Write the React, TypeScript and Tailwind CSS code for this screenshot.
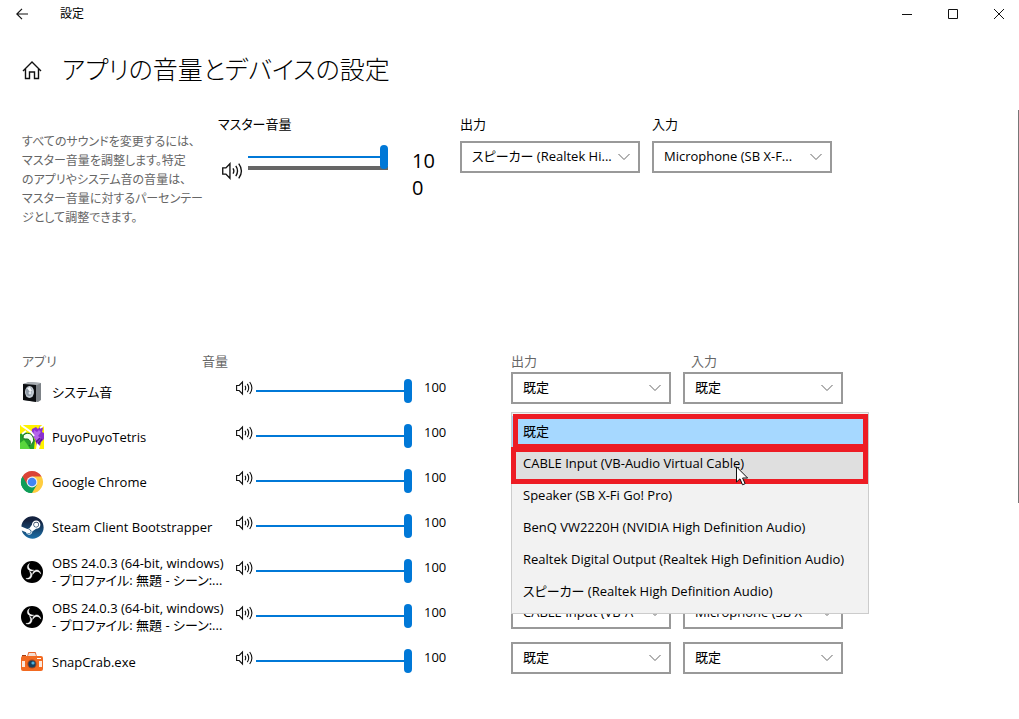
import React, { useState } from 'react';
import { FaSteam } from 'react-icons/fa';

interface AppItem {
  id: number;
  name: string[];
  icon: React.FC;
  output: string;
  input: string;
}

const SystemIcon = () => (
  <svg width="24" height="24" viewBox="0 0 24 24">
    <path d="M3 4l6-2 12 1v17l-3 2-15-2z" fill="#7d8287" />
    <path d="M3 4l6-2 12 1-4 2z" fill="#a9aeb3" />
    <path d="M3 4l13 1v17L3 20z" fill="#0b0d10" />
    <ellipse cx="9.500" cy="12" rx="4.500" ry="6" fill="#c3cbd3" />
    <ellipse cx="9" cy="11.500" rx="3" ry="4.500" fill="#8e99a5" />
    <path d="M7 8l3-1 2 4-2 1z" fill="#f2f5f8" />
    <circle cx="10" cy="13" r="1.500" fill="#dfe5eb" />
  </svg>
);

const PuyoIcon = () => (
  <svg width="24" height="24" viewBox="0 0 24 24">
    <rect width="24" height="24" fill="#fff200" />
    <path d="M0 9l5-2 6 3 4 5-1 9H0z" fill="#25a02c" />
    <path d="M0 18l4-3 3 4 3 5H0z" fill="#58d63c" />
    <path d="M12 4l4-2 2 2 2-3 3 2-1 4 2 1v6l-3 3-1 4h-3l-2-7-4-4z" fill="#8a2fd0" />
    <path d="M14 5l3 2 2-2 2 2-3 4 3 2-4 3-4-5z" fill="#b565ea" />
    <path d="M16 17l4-4M18 19l4-5" stroke="#5a1698" strokeWidth="1.500" />
    <path d="M1 0l10 7 3 4M24 0l-4 3M2 9l4-3" stroke="#fff" strokeWidth="2" fill="none" />
    <path d="M3 12c1-5 8-5 10 0s-2 8-4 9c3-3 1-7-2-7s-4 0-4-2z" fill="#f4fff0" stroke="#12741a" strokeWidth="1" />
    <path d="M17 18l3 3-1 3h-3z" fill="#fff" />
  </svg>
);

const ChromeIcon = () => (
  <svg width="24" height="24" viewBox="0 0 24 24">
    <path d="M12 12L2.470 6.500A11 11 0 0 1 21.530 6.500z" fill="#db4437" />
    <path d="M12 12L21.530 6.500A11 11 0 0 1 12 23z" fill="#ffcd40" />
    <path d="M12 12L12 23A11 11 0 0 1 2.470 6.500z" fill="#0f9d58" />
    <path d="M12 6.500h9.530L16.800 14.700z" fill="#ffcd40" />
    <path d="M7.200 14.700L2.470 6.500 12 6.500z" fill="#db4437" />
    <path d="M2.470 6.500L7.200 14.800l9.600 0L12 23A11 11 0 0 1 2.470 6.500z" fill="#0f9d58" />
    <circle cx="12" cy="12" r="5.400" fill="#f1f1f1" />
    <circle cx="12" cy="12" r="4.300" fill="#4285f4" />
  </svg>
);

const SteamIcon = () => (
  <span className="flex h-6 w-6 items-center justify-center">
    <svg width="0" height="0" className="absolute">
      <linearGradient id="steam" x1="0" y1="0" x2="0" y2="1">
        <stop offset="0.200" stopColor="#14223f" />
        <stop offset="1" stopColor="#1b6fa8" />
      </linearGradient>
    </svg>
    <FaSteam size={23} fill="url(#steam)" />
  </span>
);

const ObsIcon = () => (
  <svg width="24" height="24" viewBox="0 0 24 24">
    <circle cx="12" cy="12" r="11" fill="#000" />
    {[0, 120, 240].map(angle => (
      <path
        key={angle}
        transform={`rotate(${angle} 12 12)`}
        d="M9.500 3.500C6.600 5 6.600 9.500 10 10.700C11.500 11.200 12.800 10.800 13.800 10.200C12.500 10 10.600 10 9.400 8.600C8.200 7 8.300 5 9.500 3.500z"
        fill="#fff"
        stroke="#fff"
        strokeWidth="0.400"
      />
    ))}
  </svg>
);

const SnapCrabIcon = () => (
  <svg width="24" height="24" viewBox="0 0 24 24">
    <path d="M8 3q0-1 1-1h6q1 0 1 1l1 4H7z" fill="#e8632a" />
    <path d="M9 3h6l1 3H8z" fill="#f4ddd2" />
    <path d="M2 5h4v2H2z" fill="#a33c14" />
    <rect x="1" y="6" width="22" height="15" rx="2" fill="#f26a21" />
    <path d="M2 11h4v6H2zM18 11h4v6h-4z" fill="#fbe9de" />
    <path d="M5 9h14v10H5z" fill="#f26a21" />
    <circle cx="12" cy="14" r="4.600" fill="#a9461c" />
    <circle cx="12" cy="14" r="3.600" fill="#17405f" />
    <circle cx="13" cy="13" r="1.600" fill="#4fb0dc" />
    <path d="M17 8.500h4" stroke="#fff" strokeWidth="1" />
  </svg>
);

const OBS_NAME = ['OBS 24.0.3 (64-bit, windows)', '- プロファイル: 無題 - シーン:...'];

const APPS: AppItem[] = [
  { id: 1, name: ['システム音'], icon: SystemIcon, output: '既定', input: '既定' },
  { id: 2, name: ['PuyoPuyoTetris'], icon: PuyoIcon, output: '既定', input: '既定' },
  { id: 3, name: ['Google Chrome'], icon: ChromeIcon, output: '既定', input: '既定' },
  { id: 4, name: ['Steam Client Bootstrapper'], icon: SteamIcon, output: '既定', input: '既定' },
  { id: 5, name: OBS_NAME, icon: ObsIcon, output: '既定', input: '既定' },
  { id: 6, name: OBS_NAME, icon: ObsIcon, output: 'CABLE Input (VB-A', input: 'Microphone (SB X-' },
  { id: 7, name: ['SnapCrab.exe'], icon: SnapCrabIcon, output: '既定', input: '既定' },
];

const DEVICES = [
  '既定',
  'CABLE Input (VB-Audio Virtual Cable)',
  'Speaker (SB X-Fi Go! Pro)',
  'BenQ VW2220H (NVIDIA High Definition Audio)',
  'Realtek Digital Output (Realtek High Definition Audio)',
  'スピーカー (Realtek High Definition Audio)',
];

const SpeakerIcon = ({ size }: { size: number }) => (
  <svg width={size} height={size} viewBox="0 0 18 18" fill="none" stroke="#111" strokeWidth="1.100">
    <path d="M.6 6.500h2.600L6.500 3v12L3.200 11.500H.6z" />
    <path d="M9 6.800q1.400 2.200 0 4.400M11.300 4.900q2.800 4.100 0 8.200M13.700 3q4.400 6 0 12" />
  </svg>
);

const VolumeSlider = ({ label }: { label: string }) => (
  <input
    type="range"
    aria-label={label}
    defaultValue={100}
    className="relative z-10 block h-6 w-full appearance-none bg-transparent [&::-webkit-slider-runnable-track]:h-0.5 [&::-webkit-slider-runnable-track]:bg-[#0078d7] [&::-webkit-slider-thumb]:-mt-[11px] [&::-webkit-slider-thumb]:h-6 [&::-webkit-slider-thumb]:w-2 [&::-webkit-slider-thumb]:appearance-none [&::-webkit-slider-thumb]:rounded-full [&::-webkit-slider-thumb]:bg-[#0078d7]"
  />
);

const DeviceSelect = ({ id, label, value }: { id?: string; label?: string; value: string }) => (
  <div className="relative">
    <select
      id={id}
      aria-label={label}
      className="block h-8 w-full appearance-none border-2 border-[#999] bg-white pr-5 pl-2.5 text-[13px] text-black outline-none"
    >
      <option>{value}</option>
    </select>
    <svg className="pointer-events-none absolute top-3 right-2.5" width="12" height="8" viewBox="0 0 12 8">
      <path d="M.5 1L6 6.500 11.500 1" fill="none" stroke="#666" />
    </svg>
  </div>
);

const DeviceMenu = () => {
  const [selected, setSelected] = useState(0);

  return (
    <div
      role="listbox"
      aria-label="出力デバイス"
      className="absolute -top-[5px] left-0 z-20 w-[358px] border border-[#ccc] bg-[#f2f2f2] pt-[3px] pb-[5px]"
    >
      {DEVICES.map((device, i) => (
        <button
          key={device}
          role="option"
          aria-selected={selected === i}
          onClick={() => setSelected(i)}
          className={`flex h-8 w-full items-center pl-[11px] text-[13px] whitespace-nowrap ${
            selected === i ? 'bg-[#a6d8ff]' : i === 1 ? 'bg-[#dfdfdf]' : 'hover:bg-[#dfdfdf]'
          }`}
        >
          {device}
        </button>
      ))}
      {/* Highlight frames */}
      <div className="pointer-events-none absolute top-px right-0 left-px h-[35px] border-5 border-[#ed1c24]" />
      <div className="pointer-events-none absolute top-[34px] right-0 -left-px h-[37px] border-5 border-[#ed1c24]" />
      {/* Mouse pointer */}
      <svg className="pointer-events-none absolute top-[53px] left-[224px]" width="13" height="20" viewBox="0 0 13 20">
        <path d="M.5 .8v15.200l3.500-3.200 2.500 6 2.600-1.100-2.500-5.700h5z" fill="#fff" stroke="#111" />
      </svg>
    </div>
  );
};

const TitleBar = () => (
  <div className="flex h-7 items-center overflow-hidden">
    <button aria-label="戻る" className="flex h-7 w-11 items-center justify-center">
      <svg width="12" height="12" viewBox="0 0 12 12" fill="none" stroke="#111" strokeWidth="1.200">
        <path d="M12 6H.8M6 .8L.8 6 6 11.200" />
      </svg>
    </button>
    <span className="ml-4 flex-1 text-xs">設定</span>
    <div className="-mr-[3px] flex">
      <button aria-label="最小化" className="flex h-7 w-[46px] items-center justify-center">
        <svg width="10" height="10" viewBox="0 0 10 10"><path d="M0 5.500h10" stroke="#111" /></svg>
      </button>
      <button aria-label="最大化" className="flex h-7 w-[46px] items-center justify-center">
        <svg width="10" height="10" viewBox="0 0 10 10"><path d="M.5 .5h9v9h-9z" fill="none" stroke="#111" /></svg>
      </button>
      <button aria-label="閉じる" className="flex h-7 w-[46px] items-center justify-center">
        <svg width="10" height="10" viewBox="0 0 10 10"><path d="M0 0l10 10M10 0L0 10" stroke="#111" /></svg>
      </button>
    </div>
  </div>
);

const App: React.FC = () => {
  return (
    <div className="relative min-h-screen bg-white font-['Open_Sans','Noto_Sans_CJK_JP',sans-serif] text-black [font-feature-settings:'palt']">
      <TitleBar />

      {/* Heading */}
      <div className="flex h-[84px] items-center gap-5 pl-[22px]">
        <svg width="20" height="20" viewBox="0 0 20 20" fill="none" stroke="#111" strokeWidth="1.400">
          <path d="M1 11L10 2l9 9M3.500 9v9.500h4V12h5v6.500h4V9" />
        </svg>
        <h1 className="text-[25px] font-light whitespace-nowrap">アプリの音量とデバイスの設定</h1>
      </div>

      {/* Master volume */}
      <div className="flex h-[239px] items-start pl-[22px]">
        <p className="w-[196px] pt-5 text-xs leading-[19px] whitespace-nowrap text-[#666]">
          すべてのサウンドを変更するには、<br />
          マスター音量を調整します。特定<br />
          のアプリやシステム音の音量は、<br />
          マスター音量に対するパーセンテー<br />
          ジとして調整できます。
        </p>
        <div className="w-[242px]">
          <div className="h-[29px] text-[13px] leading-6">マスター音量</div>
          <div className="flex items-start pl-1">
            <div className="w-[26px] pt-[19px]">
              <SpeakerIcon size={22} />
            </div>
            <div className="w-[140px] pt-1">
              <VolumeSlider label="マスター音量" />
              <div className="-mt-[3px] h-1 bg-[#666]" />
            </div>
            <div className="ml-6 w-6 pt-1.5 text-xl leading-[27px] break-all">100</div>
          </div>
        </div>
        <div className="flex gap-3">
          <div className="w-[180px]">
            <label htmlFor="master-output" className="block h-[29px] text-[13px] leading-6">出力</label>
            <DeviceSelect id="master-output" value="スピーカー (Realtek Hi..." />
          </div>
          <div className="w-[180px]">
            <label htmlFor="master-input" className="block h-[29px] text-[13px] leading-6">入力</label>
            <DeviceSelect id="master-input" value="Microphone (SB X-F..." />
          </div>
        </div>
      </div>

      {/* App list */}
      <div className="pb-10 pl-5">
        <div className="grid h-[21px] grid-cols-[182px_309px_180px_160px] items-center text-[13px] text-[#666]">
          <span className="pl-0.5">アプリ</span>
          <span>音量</span>
          <span>出力</span>
          <span>入力</span>
        </div>
        <div className="flex flex-col gap-[13px]">
          {APPS.map(app => (
            <div
              key={app.id}
              className="relative grid grid-cols-[32px_184px_20px_156px_99px_172px_160px] grid-rows-[32px] items-center"
            >
              <div className="pt-2">
                <app.icon />
              </div>
              <div className="pt-2 text-[13px] leading-[17px] whitespace-nowrap">
                {app.name.map(line => (
                  <div key={line}>{line}</div>
                ))}
              </div>
              <SpeakerIcon size={18} />
              <div className="pt-1.5">
                <VolumeSlider label={app.name[0]} />
              </div>
              <span className="pl-3 text-[13px]">100</span>
              <div className="relative pr-3">
                <DeviceSelect label="出力" value={app.output} />
                {app.id === 2 && <DeviceMenu />}
              </div>
              <DeviceSelect label="入力" value={app.input} />
            </div>
          ))}
        </div>
      </div>

      {/* Scrollbar */}
      <div className="absolute top-[110px] right-0 h-[393px] w-px bg-[#777]" />
    </div>
  );
};

export default App;
